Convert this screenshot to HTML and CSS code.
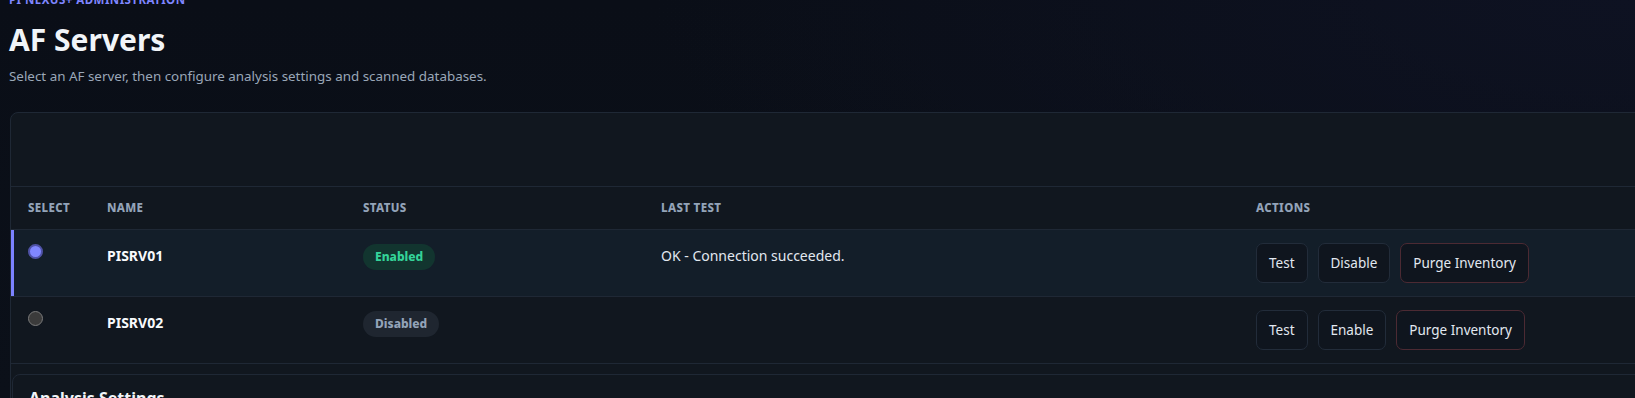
FILE: index.html
```html
<!DOCTYPE html>
<html lang="en">
<head>
    <meta charset="UTF-8">
    <meta name="viewport" content="width=device-width, initial-scale=1.0">
    <title>AF Servers</title>
    <link rel="stylesheet" href="styles.css">
</head>
<body>
    <div class="page">
        <header class="page-head">
            <div class="eyebrow">PI Nexus+ Administration</div>
            <h1>AF Servers</h1>
            <p class="subtitle">Select an AF server, then configure analysis settings and scanned databases.</p>
        </header>

        <div class="card">
            <div class="card-toolbar"></div>

            <table class="servers">
                <colgroup>
                    <col class="col-select">
                    <col class="col-name">
                    <col class="col-status">
                    <col class="col-test">
                    <col>
                </colgroup>
                <thead>
                    <tr>
                        <th>Select</th>
                        <th>Name</th>
                        <th>Status</th>
                        <th>Last Test</th>
                        <th>Actions</th>
                    </tr>
                </thead>
                <tbody>
                    <tr class="selected">
                        <td><span class="radio checked"></span></td>
                        <td class="name">PISRV01</td>
                        <td><span class="badge on">Enabled</span></td>
                        <td class="last-test">OK - Connection succeeded.</td>
                        <td>
                            <div class="actions">
                                <button class="btn">Test</button>
                                <button class="btn">Disable</button>
                                <button class="btn danger">Purge Inventory</button>
                            </div>
                        </td>
                    </tr>
                    <tr>
                        <td><span class="radio"></span></td>
                        <td class="name">PISRV02</td>
                        <td><span class="badge off">Disabled</span></td>
                        <td class="last-test"></td>
                        <td>
                            <div class="actions">
                                <button class="btn">Test</button>
                                <button class="btn">Enable</button>
                                <button class="btn danger">Purge Inventory</button>
                            </div>
                        </td>
                    </tr>
                </tbody>
            </table>

            <section class="settings">
                <h2>Analysis Settings</h2>
            </section>
        </div>
    </div>
</body>
</html>
```

FILE: styles.css
```css
html, body {
    margin: 0;
    height: 100%;
}

body {
    font-family: "Noto Sans", "Open Sans", Arial, sans-serif;
    color: #e2e8f0;
    background: radial-gradient(ellipse 60% 90% at 100% 0%, #0e1222 0%, rgba(14, 18, 34, 0) 100%),
                linear-gradient(180deg, #0a0e17 0%, #0b1019 100%);
    overflow: hidden;
}

.page {
    margin-top: -7px;
}

.page-head {
    padding-left: 9px;
}

.eyebrow {
    font-size: 11.5px;
    font-weight: 700;
    letter-spacing: 0.04em;
    text-transform: uppercase;
    color: #7f86ff;
    line-height: 14px;
}

h1 {
    margin: 13px 0 0;
    font-size: 30px;
    line-height: 40px;
    font-weight: 700;
    color: #f1f5f9;
}

.subtitle {
    margin: 6px 0 0;
    font-size: 13.4px;
    line-height: 20px;
    color: #9aa7b8;
}

.card {
    margin: 26px 0 0 10px;
    width: 1700px;
    background: #11171f;
    border: 1px solid #1f2835;
    border-radius: 8px;
}

.card-toolbar {
    height: 73px;
    border-bottom: 1px solid #1f2835;
}

.servers {
    width: 100%;
    border-collapse: collapse;
    table-layout: fixed;
}

.col-select { width: 79px; }
.col-name { width: 256px; }
.col-status { width: 298px; }
.col-test { width: 595px; }

.servers th {
    text-align: left;
    padding: 14px 17px;
    font-size: 11.5px;
    line-height: 14px;
    font-weight: 800;
    letter-spacing: 0.03em;
    text-transform: uppercase;
    color: #93a3b8;
    border-bottom: 1px solid #1f2835;
}

.servers td {
    padding: 13px 17px 13px;
    vertical-align: top;
    font-size: 14px;
    line-height: 26px;
    border-bottom: 1px solid #1f2835;
}

.servers tr.selected td {
    background: #131e29;
}

.servers tr.selected td:first-child {
    box-shadow: inset 3px 0 0 #7c83ff;
}

.radio {
    display: block;
    box-sizing: border-box;
    width: 15px;
    height: 15px;
    margin-top: 1px;
    border-radius: 50%;
    background: #3b3b3b;
    border: 1px solid #7a7a7a;
}

.radio.checked {
    background: #8087ff;
    border: 2px solid #4f52a6;
}

.name {
    font-weight: 700;
    color: #f8fafc;
    font-size: 13.5px;
}

.badge {
    display: inline-block;
    height: 26px;
    padding: 0 12px;
    border-radius: 13px;
    font-size: 12px;
    font-weight: 800;
    line-height: 26px;
}

.badge.on {
    background: #12352f;
    color: #34d399;
}

.badge.off {
    background: #1f2630;
    color: #93a3b8;
}

.last-test {
    color: #e2e8f0;
}

.actions {
    display: flex;
    gap: 10px;
}

.btn {
    height: 40px;
    padding: 0 12px;
    font-family: inherit;
    font-size: 13.5px;
    color: #e2e8f0;
    background: #0f151e;
    border: 1px solid #222c3a;
    border-radius: 7px;
    cursor: pointer;
}

.btn.danger {
    border-color: #4c2a33;
}

.settings {
    margin-top: 10px;
    margin-left: 1px;
    padding: 12px 16px;
    border: 1px solid #1f2835;
    border-radius: 8px;
    background: #11171f;
}

.settings h2 {
    margin: 0;
    font-size: 16px;
    font-weight: 700;
    color: #f1f5f9;
}
```
